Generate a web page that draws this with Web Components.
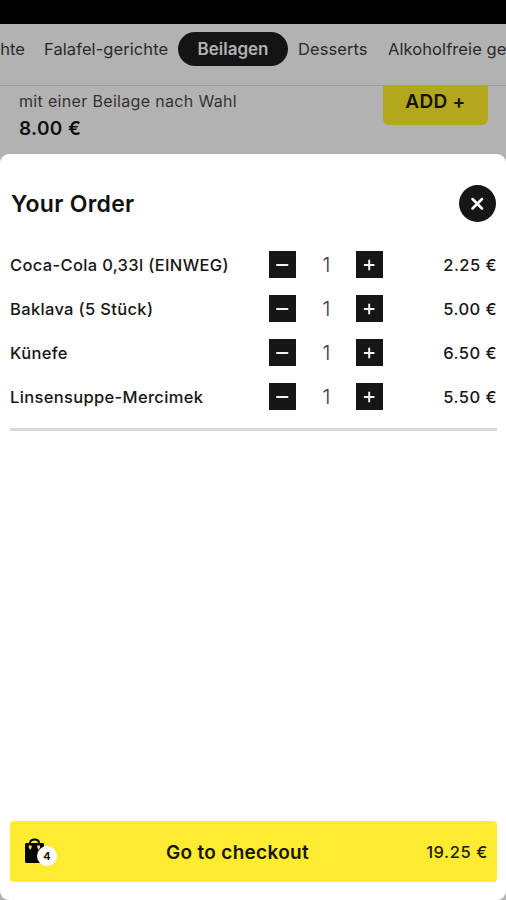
<!DOCTYPE html>
<html lang="de">
<head>
<meta charset="utf-8">
<title>Your Order</title>
<style>
html, body { margin: 0; height: 900px; overflow: hidden; }
body { font-family: Inter, "Liberation Sans", sans-serif; color: #111; }
</style>
</head>
<body>
<order-app></order-app>
<script>
function define(name, html, init) {
  customElements.define(name, class extends HTMLElement {
    constructor() {
      super();
      this.attachShadow({ mode: "open" }).innerHTML = "<style>*{box-sizing:border-box}</style>" + html;
      if (init) init(this, this.shadowRoot);
    }
  });
}

define("nav-tab", `
<style>
:host { flex: none; display: flex; align-items: center; height: 34px; white-space: nowrap; font-size: 16.5px; line-height: 22px; color: #2a2a2a; letter-spacing: .08px; }
:host([active]) { width: 110px; justify-content: center; border-radius: 17px; background: #141414; color: #b2b2b2; font-weight: 600; font-size: 17px; letter-spacing: 0; }
</style><slot></slot>`);

define("category-nav", `
<style>
:host { display: flex; height: 62px; padding-top: 8px; align-items: flex-start; border-bottom: 1px solid #9d9d9d; background: #b2b2b2; overflow: hidden; }
.a { width: 25px; display: flex; justify-content: flex-end; margin-right: 19px; flex: none; }
.b { width: 134px; } .c { width: 90px; margin-left: 10px; }
</style>
<div class="a"><nav-tab>hte</nav-tab></div>
<nav-tab class="b">Falafel-gerichte</nav-tab>
<nav-tab active>Beilagen</nav-tab>
<nav-tab class="c">Desserts</nav-tab>
<nav-tab>Alkoholfreie ge</nav-tab>`);

define("menu-item", `
<style>
:host { display: flex; justify-content: space-between; height: 68px; padding: 0 18px 0 19px; }
.d { padding-top: 4px; font-size: 16px; line-height: 22px; color: #333; letter-spacing: .33px; }
.p { padding-top: 4px; font-size: 19px; line-height: 26px; font-weight: 600; color: #111; letter-spacing: .35px; }
.add { width: 105px; height: 39px; border-radius: 0 0 6px 6px; background: #b3a71e; font-size: 19px; font-weight: 600; line-height: 31px; text-align: center; color: #141400; letter-spacing: .3px; }
</style>
<div><div class="d">mit einer Beilage nach Wahl</div><div class="p">8.00 €</div></div>
<div class="add">ADD +</div>`);

define("step-button", `
<style>
:host { display: block; width: 27px; height: 27px; background: #161616; }
svg { display: block; }
</style>
<svg width="27" height="27" viewBox="0 0 27 27" stroke="#f2f2f2" stroke-width="2" stroke-linecap="round"><path/></svg>`,
(el, root) => root.querySelector("path").setAttribute("d",
  el.getAttribute("kind") === "plus" ? "M8.700 14H17.700M13.200 9.500V18.500" : "M8 14H18.500"));

define("order-row", `
<style>
:host { display: grid; grid-template-columns: 259px 27px 60px 27px 1fr; align-items: center; height: 44px; font-size: 16.5px; font-weight: 500; color: #161616; white-space: nowrap; letter-spacing: .34px; }
.q { text-align: center; font-size: 20px; font-weight: 300; color: #333; letter-spacing: 0; padding-left: 1px; }
.p { text-align: right; letter-spacing: .45px; }
step-button { position: relative; top: -.5px; }
</style>
<span><slot></slot></span><step-button kind="minus"></step-button><span class="q">1</span>
<step-button kind="plus"></step-button><span class="p"><slot name="price"></slot></span>`);

define("close-button", `
<style>
:host { display: block; width: 37px; height: 37px; border-radius: 50%; background: #161616; }
svg { display: block; }
</style>
<svg width="37" height="37" viewBox="0 0 37 37" stroke="#fff" stroke-width="2.5" stroke-linecap="round"><path d="M13.500 14L23 23.500M23 14L13.500 23.500"/></svg>`);

define("bag-icon", `
<style>
:host { display: block; position: relative; width: 33px; height: 28px; }
svg { display: block; }
b { position: absolute; left: 14px; top: 8px; width: 20px; height: 20px; border-radius: 50%; background: #fff; font-size: 11px; font-weight: 600; line-height: 21px; text-align: center; color: #000; }
</style>
<svg width="22" height="28" viewBox="0 0 22 28"><path d="M3 5H20Q21 5 21 6.500V25H3.500Q2 25 2 23.500V6.500Q2 5 3 5Z" fill="#000"/><path d="M7 7V5C7 .2 16 .2 16 5V7" fill="none" stroke="#000" stroke-width="2"/><path d="M5.800 7.500H8.600V9.500L7.200 12L5.800 9.500ZM14.200 7.500H17V9.500L15.600 12L14.200 9.500Z" fill="#ffe92e"/></svg>
<b><slot></slot></b>`);

define("checkout-bar", `
<style>
:host { display: grid; grid-template-columns: 33px 1fr auto; align-items: center; height: 61px; padding: 1px 9px 0 13px; border-radius: 4px; background: #ffeb2f; }
.t { font-size: 19px; font-weight: 600; color: #171500; padding-left: 110px; letter-spacing: .3px; }
.p { font-size: 16.5px; font-weight: 500; color: #201d00; letter-spacing: .6px; }
</style>
<bag-icon>4</bag-icon><span class="t">Go to checkout</span><span class="p">19.25 €</span>`);

define("order-sheet", `
<style>
:host { display: flex; flex-direction: column; height: 746px; padding: 0 9px 18px 10px; border-radius: 9px; background: #fff; }
header { display: flex; justify-content: space-between; align-items: center; height: 37px; margin: 31px 1px 21px 1px; }
h1 { margin: 0; font-size: 23px; line-height: 30px; font-weight: 600; color: #111; letter-spacing: .3px; }
hr { flex: none; width: 100%; height: 3px; border: 0; margin: 9px 0 auto; background: #d9d9d9; }
</style>
<header><h1>Your Order</h1><close-button></close-button></header>
<order-row>Coca-Cola 0,33l (EINWEG)<span slot="price">2.25 €</span></order-row>
<order-row>Baklava (5 Stück)<span slot="price">5.00 €</span></order-row>
<order-row>Künefe<span slot="price">6.50 €</span></order-row>
<order-row>Linsensuppe-Mercimek<span slot="price">5.50 €</span></order-row>
<hr>
<checkout-bar></checkout-bar>`);

define("order-app", `
<style>
:host { display: flex; flex-direction: column; width: 506px; height: 900px; background: #b2b2b2; overflow: hidden; }
.status { height: 24px; background: #000; flex: none; }
</style>
<div class="status"></div>
<category-nav></category-nav>
<menu-item></menu-item>
<order-sheet></order-sheet>`);
</script>
</body>
</html>
